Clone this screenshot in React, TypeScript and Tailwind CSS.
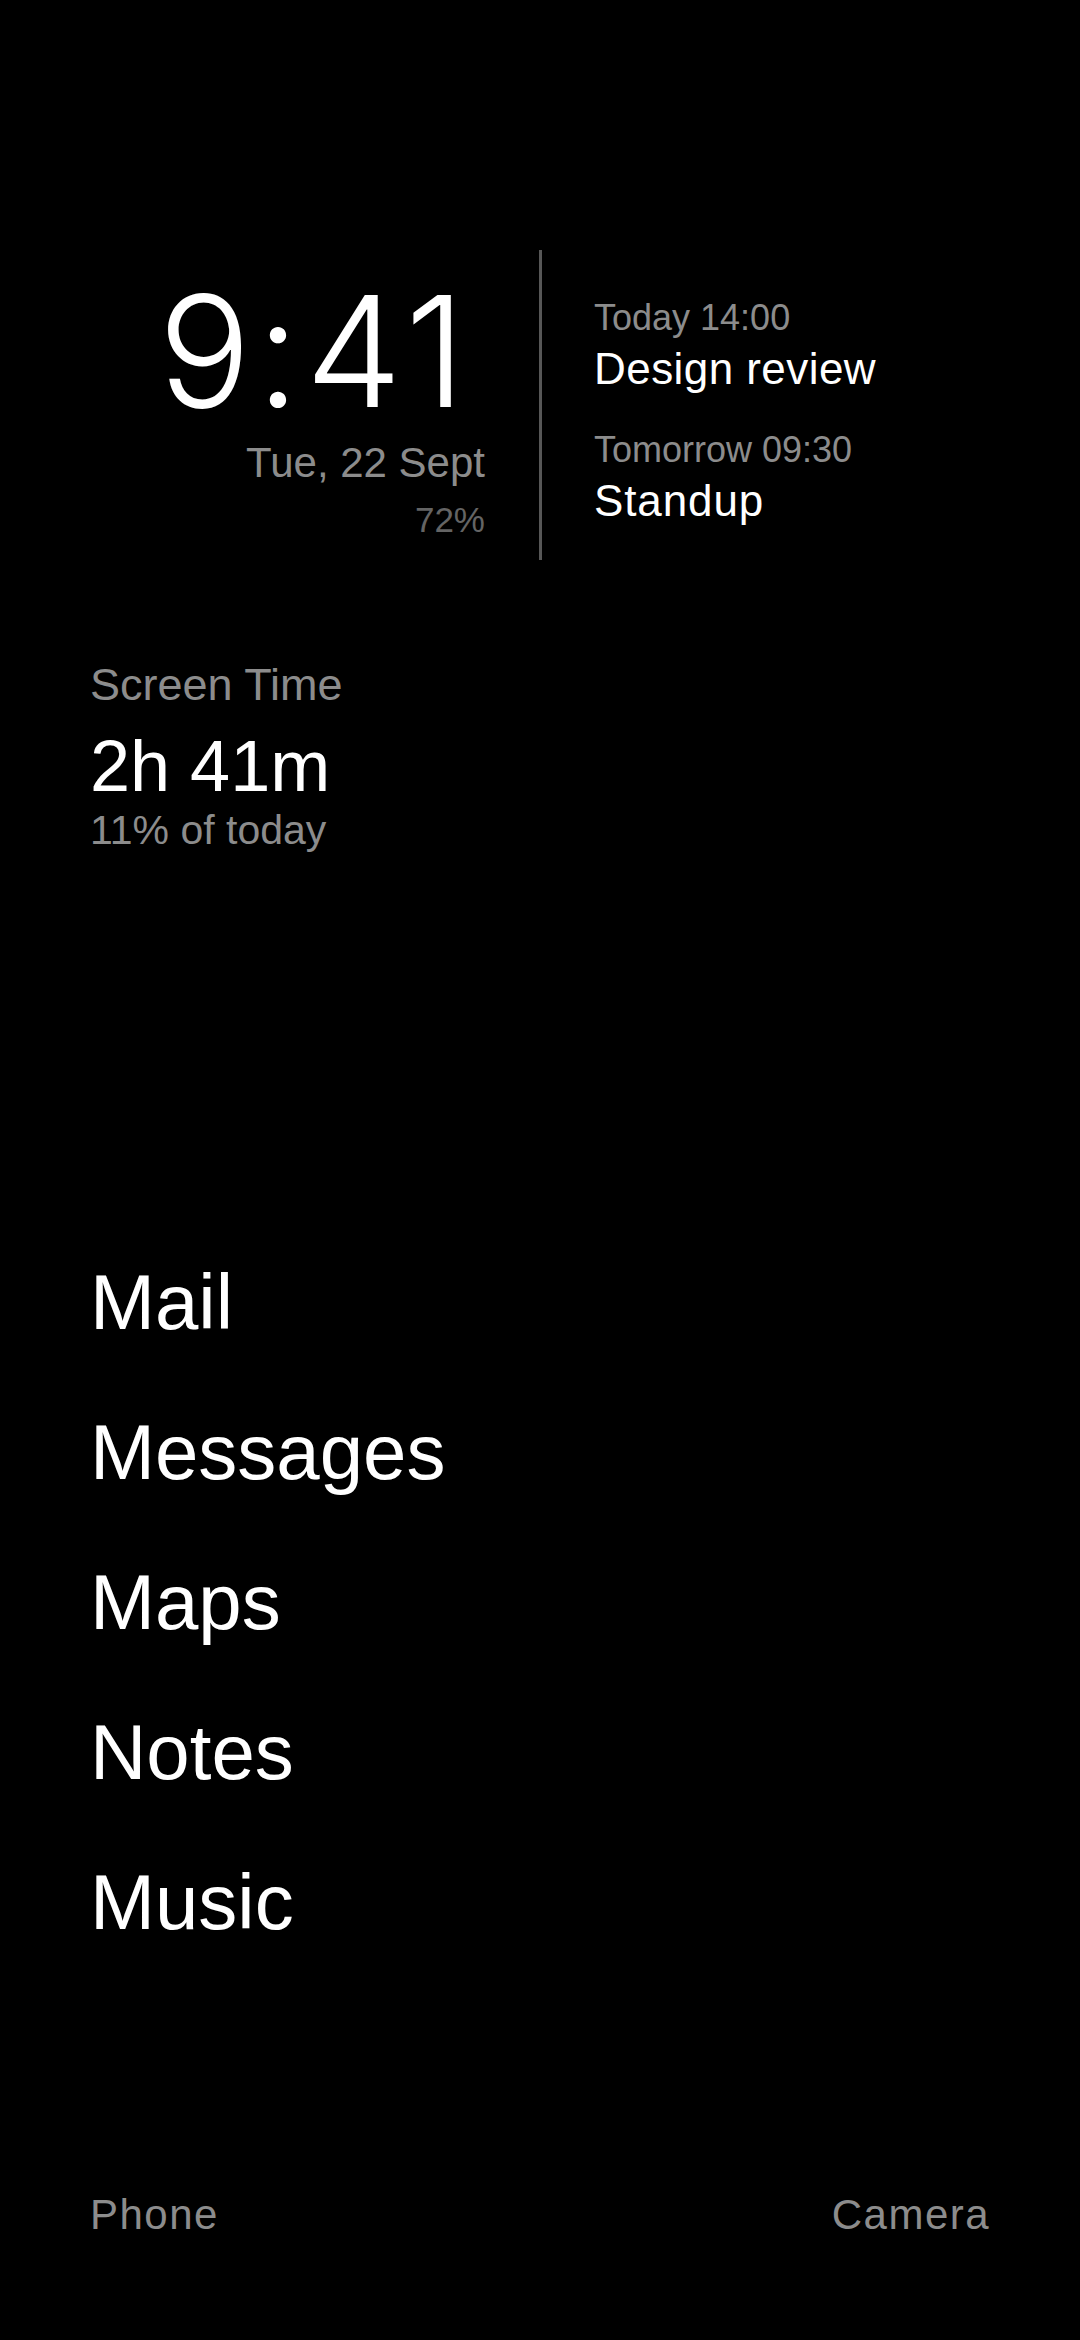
export default function App() {
  const apps = ["Mail", "Messages", "Maps", "Notes", "Music"];

  return (
    <div className="flex h-[2340px] w-[1080px] flex-col bg-black px-[90px] font-['Liberation_Sans',Arial,sans-serif] text-white">
      {/* clock + agenda */}
      <div className="-ml-[90px] flex pt-[250px]">
        <div className="flex w-[485px] shrink-0 flex-col items-end text-right">
          <div className="mt-[24px] pr-[14px] font-['Inter',sans-serif] text-[154px] font-light leading-none tracking-[0.035em]">9:41</div>
          <div className="mt-[14px] text-[42px] leading-none text-[#8c8c8c]">Tue, 22 Sept</div>
          <div className="mt-[18px] text-[35px] leading-none text-[#646464]">72%</div>
        </div>
        <div className="ml-[54px] h-[310px] w-[3px] bg-[#575757]" />
        <div className="ml-[52px] flex flex-col">
          <div className="mt-[50px] text-[36px] leading-none text-[#8c8c8c]">Today 14:00</div>
          <div className="mt-[11px] text-[44px] leading-none tracking-[0.01em]">Design review</div>
          <div className="mt-[41px] text-[36px] leading-none text-[#8c8c8c]">Tomorrow 09:30</div>
          <div className="mt-[11px] text-[44px] leading-none tracking-[0.02em]">Standup</div>
        </div>
      </div>

      {/* screen time */}
      <div className="mt-[102px] flex flex-col">
        <div className="text-[45px] leading-none text-[#8c8c8c]">Screen Time</div>
        <div className="mt-[23px] text-[72px] leading-none">2h 41m</div>
        <div className="mt-[8px] text-[41px] leading-none text-[#8c8c8c]">11% of today</div>
      </div>

      {/* apps */}
      <div className="mt-[376px] flex flex-col">
        {apps.map((a) => (
          <div key={a} className="text-[78px] leading-[150px]">
            {a}
          </div>
        ))}
      </div>

      {/* bottom shortcuts */}
      <div className="mt-auto flex justify-between pb-[104px] text-[42px] leading-none tracking-[0.035em] text-[#8c8c8c]">
        <span>Phone</span>
        <span>Camera</span>
      </div>
    </div>
  );
}
